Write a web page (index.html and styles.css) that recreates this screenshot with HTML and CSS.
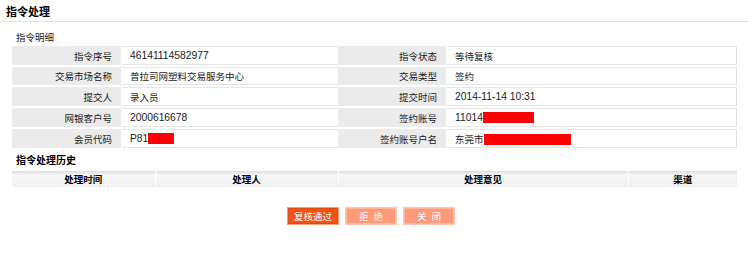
FILE: index.html
```html
<!DOCTYPE html>
<html lang="zh">
<head>
<meta charset="utf-8">
<link rel="stylesheet" href="styles.css">
</head>
<body>
<div class="page">
  <h1 class="title">指令处理</h1>
  <div class="section">
    <h2 class="sub">指令明细</h2>
    <table class="detail">
      <colgroup><col class="c1"><col class="c2"><col class="c3"><col class="c4"></colgroup>
      <tr><th>指令序号</th><td><span class="num">46141114582977</span></td><th>指令状态</th><td>等待复核</td></tr>
      <tr><th>交易市场名称</th><td>普拉司网塑料交易服务中心</td><th>交易类型</th><td>签约</td></tr>
      <tr><th>提交人</th><td>录入员</td><th>提交时间</th><td><span class="num">2014-11-14 10:31</span></td></tr>
      <tr><th>网银客户号</th><td><span class="num">2000616678</span></td><th>签约账号</th><td><span class="num">11014</span><span class="red r1"></span></td></tr>
      <tr><th>会员代码</th><td><span class="num">P81</span><span class="red r2"></span></td><th>签约账号户名</th><td>东莞市<span class="red r3"></span></td></tr>
    </table>
    <h2 class="sub bold">指令处理历史</h2>
    <table class="history">
      <colgroup><col class="h1"><col class="h2"><col class="h3"><col class="h4"></colgroup>
      <tr><th>处理时间</th><th>处理人</th><th>处理意见</th><th>渠道</th></tr>
    </table>
    <div class="buttons">
      <button class="btn primary">复核通过</button>
      <button class="btn light spaced">拒 绝</button>
      <button class="btn light spaced">关 闭</button>
    </div>
  </div>
</div>
</body>
</html>
```

FILE: styles.css
```css
html, body {
  margin: 0;
  padding: 0;
  background: #fff;
}
body {
  font-family: "Noto Sans CJK SC", sans-serif;
  font-size: 9.5px;
  color: #1a1a1a;
}
.page {
  width: 748px;
}
.title {
  margin: 0;
  padding: 2px 0 0 6px;
  height: 19px;
  font-size: 11px;
  font-weight: bold;
  line-height: 19px;
  color: #000;
  border-bottom: 1px solid #e2e2e2;
}
.section {
  padding: 0 12px;
}
.sub {
  margin: 0;
  padding: 6px 0 0 4px;
  height: 18px;
  line-height: 18px;
  font-size: 9.5px;
  font-weight: normal;
}
.sub.bold {
  font-weight: bold;
  font-size: 10px;
  color: #000;
  padding-top: 1px;
  height: 20px;
}
.num {
  font-family: "Liberation Sans", sans-serif;
  font-size: 10.3px;
}
.detail {
  width: 725px;
  border-collapse: separate;
  border-spacing: 0 2px;
  table-layout: fixed;
  margin-top: -2px;
}
.c1 { width: 110px; }
.c2 { width: 216px; }
.c3 { width: 109px; }
.c4 { width: 290px; }
.detail th, .detail td {
  padding: 0;
  font-size: 9.5px;
  white-space: nowrap;
  overflow: hidden;
}
.detail th {
  height: 18px;
  line-height: 18px;
  background: #ebebeb;
  text-align: right;
  font-weight: normal;
  padding-right: 9px;
  border-right: 1px solid #fff;
}
.detail td {
  height: 16px;
  line-height: 16px;
  background: #fff;
  text-align: left;
  padding-left: 8px;
  border-top: 1px solid #e6e6e6;
  border-bottom: 1px solid #e6e6e6;
}
.detail td:last-child {
  border-right: 1px solid #e0e0e0;
}
.red {
  display: inline-block;
  background: #ff0000;
  height: 11px;
  vertical-align: -2px;
}
.r1 { width: 51px; }
.r2 { width: 26px; }
.r3 { width: 87px; }
.history {
  width: 725px;
  border-collapse: collapse;
  table-layout: fixed;
}
.h1 { width: 143px; }
.h2 { width: 183px; }
.h3 { width: 290px; }
.h4 { width: 109px; }
.history th {
  height: 16px;
  padding: 0;
  line-height: 16px;
  font-size: 9.5px;
  font-weight: bold;
  color: #000;
  background: linear-gradient(#dcdcdc, #f7f7f7 25%, #f1f1f1);
  border-left: 1px solid #fff;
  text-align: center;
}
.history th:first-child {
  border-left: none;
}
.buttons {
  margin-top: 20px;
  display: flex;
  justify-content: center;
  gap: 6px;
  padding-right: 6px;
}
.btn {
  font-family: "Noto Sans CJK SC", sans-serif;
  font-size: 9.5px;
  height: 18px;
  line-height: 14px;
  padding: 0;
  color: #fff;
  border: 1px solid;
  cursor: pointer;
}
.btn.spaced {
  word-spacing: 3px;
}
.btn.primary {
  width: 52px;
  background: #ee5419;
  border-color: #f9a078;
  box-shadow: inset 0 0 0 1px #e24a10;
}
.btn.light {
  width: 52px;
  background: #fd9a7a;
  border-color: #fdc7b4;
  box-shadow: inset 0 0 0 1px #ffb59c;
}
```
